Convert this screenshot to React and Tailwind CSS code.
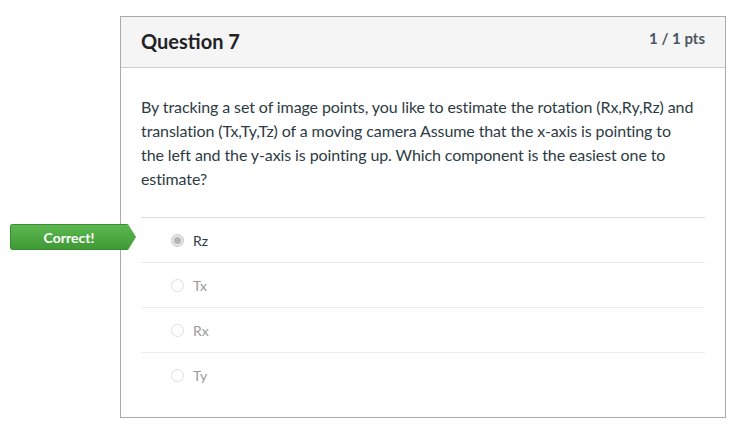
import { Fragment } from "react";

const answers = [
  { label: "Rz", picked: true },
  { label: "Tx" },
  { label: "Rx" },
  { label: "Ty" },
];

function Radio({ picked }) {
  return (
    <span
      className={
        "w-[13px] h-[13px] rounded-full border flex items-center justify-center " +
        (picked ? "border-[#c8c8c8] bg-[#e6e6e6]" : "border-[#dedede] bg-white")
      }
    >
      {picked && <span className="w-[7px] h-[7px] rounded-full bg-[#b5b5b5]" />}
    </span>
  );
}

export default function App() {
  return (
    <div className="w-[745px] h-[439px] bg-white pl-[120px] pt-4 font-['Lato','Liberation_Sans',sans-serif] text-[#2d3b45]">
      <div className="w-[606px] h-[402px] border border-[#aaaaaa]">
        <div className="h-[51px] bg-[#f5f5f5] border-b border-[#c7cdd1] flex justify-between pl-5 pr-5">
          <div className="text-[20px] font-bold leading-none pt-[14px] text-[#1f2326]">Question 7</div>
          <div className="text-[15px] font-bold leading-none pt-[14px] text-[#4a5560]">1 / 1 pts</div>
        </div>

        <div className="px-5 pt-[27px]">
          <p className="text-[16px] leading-6 tracking-[-0.1px] whitespace-nowrap">
            By tracking a set of image points, you like to estimate the rotation (Rx,Ry,Rz) and
            <br />
            translation (Tx,Ty,Tz) of a moving camera Assume that the x-axis is pointing to
            <br />
            the left and the y-axis is pointing up. Which component is the easiest one to
            <br />
            estimate?
          </p>

          <div className="mt-[26px] border-t border-[#dddddd]">
            {answers.map((a, i) => (
              <Fragment key={a.label}>
                <div
                  className={
                    "relative h-[45px] flex items-center gap-[9px] pl-[30px] " +
                    (i < answers.length - 1 ? "border-b border-[#ececec]" : "")
                  }
                >
                  {a.picked && (
                    <div className="absolute left-[-131px] top-[6px] flex items-center">
                      <div className="w-[117px] h-[26px] rounded-l-[3px] bg-gradient-to-b from-[#5cb84f] to-[#3f9a36] border border-[#3a8e32] border-r-0 flex items-center justify-center text-white text-[14px] font-bold">
                        Correct!
                      </div>
                      <svg width="9" height="26" viewBox="0 0 9 26" className="block">
                        <defs>
                          <linearGradient id="g" x1="0" y1="0" x2="0" y2="1">
                            <stop offset="0" stopColor="#5cb84f" />
                            <stop offset="1" stopColor="#3f9a36" />
                          </linearGradient>
                        </defs>
                        <path d="M0 0 L1 0 L9 13 L1 26 L0 26 Z" fill="url(#g)" />
                      </svg>
                    </div>
                  )}
                  <Radio picked={a.picked} />
                  <span className={"text-[14px] " + (a.picked ? "text-[#2d3b45]" : "text-[#9a9a9a]")}>
                    {a.label}
                  </span>
                </div>
              </Fragment>
            ))}
          </div>
        </div>
      </div>
    </div>
  );
}
